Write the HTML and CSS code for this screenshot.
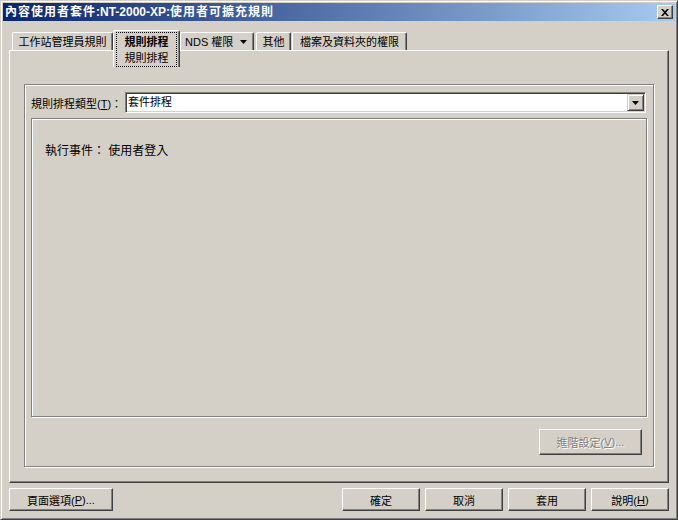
FILE: index.html
```html
<!DOCTYPE html>
<html lang="zh-Hant">
<head>
<meta charset="utf-8">
<title>內容使用者套件</title>
<link rel="stylesheet" href="styles.css">
</head>
<body>
<div class="window">
  <div class="titlebar">
    <span class="title"><span class="title-cjk">內容使用者套件</span>:NT-2000-XP:<span class="title-cjk">使用者可擴充規則</span></span>
    <span class="close-btn"><svg width="8" height="7" viewBox="0 0 8 7"><path d="M0 0h2l2 2.3 2-2.3h2L5 3.5 8 7H6L4 4.7 2 7H0l3-3.5z" fill="#000"/></svg></span>
  </div>
  <div class="tabs">
    <div class="tab tab-1">工作站管理員規則</div>
    <div class="tab tab-active">
      <div class="focus">
        <div class="tab-bold">規則排程</div>
        <div class="tab-line">規則排程</div>
      </div>
    </div>
    <div class="tab tab-3"><span>NDS 權限</span><svg class="tab-arrow" width="7" height="4" viewBox="0 0 7 4"><path d="M0 0h7L3.5 4z" fill="#000"/></svg></div>
    <div class="tab tab-4">其他</div>
    <div class="tab tab-5">檔案及資料夾的權限</div>
  </div>
  <div class="panel">
    <div class="group">
      <div class="combo-row">
        <span class="combo-label">規則排程類型(<u>T</u>)：</span>
        <div class="combo">
          <span class="combo-text">套件排程</span>
          <span class="combo-btn"><svg width="7" height="4" viewBox="0 0 7 4"><path d="M0 0h7L3.5 4z" fill="#000"/></svg></span>
        </div>
      </div>
      <div class="inner">
        <div class="event">執行事件： 使用者登入</div>
      </div>
      <div class="adv-row">
        <div class="btn btn-adv">進階設定(<u>V</u>)...</div>
      </div>
    </div>
  </div>
  <div class="footer">
    <div class="btn btn-page">頁面選項(<u>P</u>)...</div>
    <div class="btn btn-std">確定</div>
    <div class="btn btn-std">取消</div>
    <div class="btn btn-std">套用</div>
    <div class="btn btn-std">說明(<u>H</u>)</div>
  </div>
</div>
</body>
</html>
```
FILE: styles.css
```css
body {
  margin: 0;
  font-family: "Liberation Sans", "Noto Sans CJK TC", sans-serif;
  font-size: 11px;
  color: #000;
  background: #d4d0c8;
}

.window {
  width: 678px;
  height: 520px;
  box-sizing: border-box;
  background: #d4d0c8;
  border: 1px solid;
  border-color: #d4d0c8 #404040 #404040 #d4d0c8;
  box-shadow: inset 1px 1px #fff, inset -1px -1px #808080;
  padding: 2px;
  display: flex;
  flex-direction: column;
}

.titlebar {
  height: 18px;
  flex: none;
  background: linear-gradient(to right, #0a246a, #a6caf0);
  display: flex;
  align-items: center;
  justify-content: space-between;
  padding: 0 2px;
}

.title {
  color: #fff;
  font-weight: bold;
  font-size: 12px;
  line-height: 18px;
  white-space: nowrap;
}

.title-cjk { letter-spacing: 1px; }

.close-btn {
  width: 16px;
  height: 14px;
  box-sizing: border-box;
  background: #d4d0c8;
  border: 1px solid;
  border-color: #fff #404040 #404040 #fff;
  box-shadow: inset -1px -1px #808080;
  display: flex;
  align-items: center;
  justify-content: center;
}

.tabs {
  display: flex;
  align-items: flex-end;
  height: 20px;
  flex: none;
  margin: 9px 6px 0;
  padding-left: 3px;
}

.tab {
  box-sizing: border-box;
  height: 18px;
  border-top: 1px solid #fff;
  border-left: 1px solid #fff;
  border-right: 1px solid #404040;
  box-shadow: inset -1px 0 #808080;
  border-radius: 2px 2px 0 0;
  display: flex;
  align-items: center;
  justify-content: center;
  white-space: nowrap;
  line-height: 16px;
}

.tab-1 { width: 101px; }
.tab-3 { width: 74px; justify-content: flex-start; padding-left: 4px; }
.tab-4 { width: 35px; margin-left: 2px; }
.tab-5 { width: 115px; margin-left: 1px; }

.tab-arrow { margin-left: 7px; }

.tab-active {
  position: relative;
  width: 67px;
  height: 37px;
  margin-bottom: -17px;
  background: #d4d0c8;
  align-items: flex-start;
  justify-content: flex-start;
}

.focus {
  box-sizing: border-box;
  margin: 1px 0 0 2px;
  width: 61px;
  height: 35px;
  border: 1px dotted #000;
  padding-top: 1px;
  display: flex;
  flex-direction: column;
  align-items: center;
}

.tab-bold { font-weight: bold; line-height: 16px; }
.tab-line { line-height: 16px; }

.panel {
  box-sizing: border-box;
  height: 433px;
  flex: none;
  margin: 0 6px;
  border: 1px solid;
  border-color: #fff #404040 #404040 #fff;
  box-shadow: inset -1px -1px #808080;
  padding: 33px 0 0 14px;
}

.group {
  box-sizing: border-box;
  width: 630px;
  height: 383px;
  border: 1px solid #808080;
  box-shadow: inset 1px 1px #fff, 1px 1px #fff;
  padding: 7px 6px 11px 6px;
  display: flex;
  flex-direction: column;
}

.combo-row {
  display: flex;
  align-items: center;
  height: 21px;
}

.combo-label {
  width: 94px;
  white-space: nowrap;
}

.combo {
  flex: 1;
  margin-right: 1px;
  height: 21px;
  box-sizing: border-box;
  background: #fff;
  border: 1px solid;
  border-color: #808080 #fff #fff #808080;
  box-shadow: inset 1px 1px #404040, inset -1px -1px #d4d0c8;
  padding: 1px;
  display: flex;
}

.combo-text {
  flex: 1;
  padding-left: 1px;
  line-height: 17px;
}

.combo-btn {
  width: 17px;
  box-sizing: border-box;
  background: #d4d0c8;
  border: 1px solid;
  border-color: #d4d0c8 #404040 #404040 #d4d0c8;
  box-shadow: inset 1px 1px #fff, inset -1px -1px #808080;
  display: flex;
  align-items: center;
  justify-content: center;
}

.inner {
  margin-top: 5px;
  flex: 1;
  border: 1px solid #808080;
  box-shadow: inset 1px 1px #fff, 1px 1px #fff;
}

.event {
  font-size: 12px;
  line-height: 16px;
  padding: 24px 0 0 13px;
}

.adv-row {
  display: flex;
  justify-content: flex-end;
  margin-top: 12px;
  padding-right: 5px;
}

.btn {
  box-sizing: border-box;
  height: 23px;
  border: 1px solid;
  border-color: #fff #404040 #404040 #fff;
  box-shadow: inset -1px -1px #808080;
  display: flex;
  align-items: center;
  justify-content: center;
  white-space: nowrap;
}

.btn-adv {
  width: 103px;
  height: 26px;
  color: #808080;
  text-shadow: 1px 1px #fff;
}

.footer {
  display: flex;
  flex: none;
  margin: 5px 6px 0;
  gap: 5px;
}

.btn-page {
  width: 104px;
  margin-right: auto;
}

.btn-std { width: 78px; }
```
